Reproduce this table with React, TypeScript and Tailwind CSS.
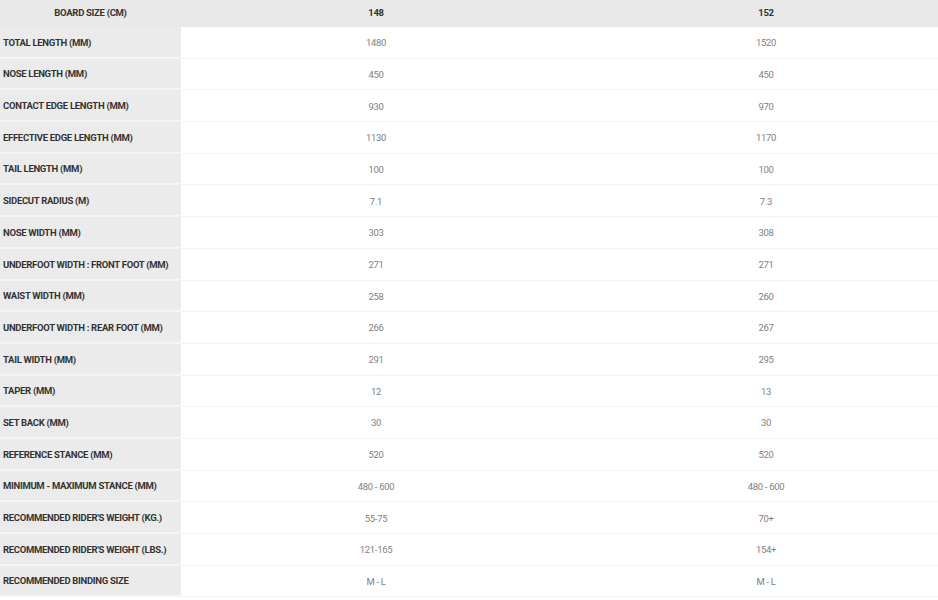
import React from "react";

type Row = { label: string; a: string; b: string };

const rows: Row[] = [
  { label: "TOTAL LENGTH (MM)", a: "1480", b: "1520" },
  { label: "NOSE LENGTH (MM)", a: "450", b: "450" },
  { label: "CONTACT EDGE LENGTH (MM)", a: "930", b: "970" },
  { label: "EFFECTIVE EDGE LENGTH (MM)", a: "1130", b: "1170" },
  { label: "TAIL LENGTH (MM)", a: "100", b: "100" },
  { label: "SIDECUT RADIUS (M)", a: "7.1", b: "7.3" },
  { label: "NOSE WIDTH (MM)", a: "303", b: "308" },
  { label: "UNDERFOOT WIDTH : FRONT FOOT (MM)", a: "271", b: "271" },
  { label: "WAIST WIDTH (MM)", a: "258", b: "260" },
  { label: "UNDERFOOT WIDTH : REAR FOOT (MM)", a: "266", b: "267" },
  { label: "TAIL WIDTH (MM)", a: "291", b: "295" },
  { label: "TAPER (MM)", a: "12", b: "13" },
  { label: "SET BACK (MM)", a: "30", b: "30" },
  { label: "REFERENCE STANCE (MM)", a: "520", b: "520" },
  { label: "MINIMUM - MAXIMUM STANCE (MM)", a: "480 - 600", b: "480 - 600" },
  { label: "RECOMMENDED RIDER'S WEIGHT (KG.)", a: "55-75", b: "70+" },
  { label: "RECOMMENDED RIDER'S WEIGHT (LBS.)", a: "121-165", b: "154+" },
  { label: "RECOMMENDED BINDING SIZE", a: "M - L", b: "M - L" },
];

export default function App() {
  return (
    <main className="h-[600px] w-[938px] overflow-hidden bg-white" style={{ fontFamily: "Roboto, 'Liberation Sans', sans-serif" }}>
      <div className="w-[961px]">
        {/* header */}
        <div className="grid h-[27px] grid-cols-[181px_390px_390px] items-center bg-[#e9e9e9] text-[9.5px] font-bold text-[#333] tracking-[-0.3px]">
          <div className="text-center">BOARD SIZE (CM)</div>
          <div className="text-center">148</div>
          <div className="text-center">152</div>
        </div>

        {rows.map((r) => (
          <div key={r.label} className="grid h-[31.7px] grid-cols-[181px_390px_390px] border-b border-[#f3f3f3]">
            <div className="flex items-center bg-[#ebebeb] border-b border-[#f6f6f6] pl-[3px] pt-[2px] text-[9.5px] font-bold tracking-[-0.3px] text-[#333] whitespace-nowrap">
              {r.label}
            </div>
            <div className="flex items-center justify-center pt-[2px] text-[9.5px] tracking-[-0.3px] text-[#808080]">{r.a}</div>
            <div className="flex items-center justify-center pt-[2px] text-[9.5px] tracking-[-0.3px] text-[#808080]">{r.b}</div>
          </div>
        ))}
      </div>
    </main>
  );
}
